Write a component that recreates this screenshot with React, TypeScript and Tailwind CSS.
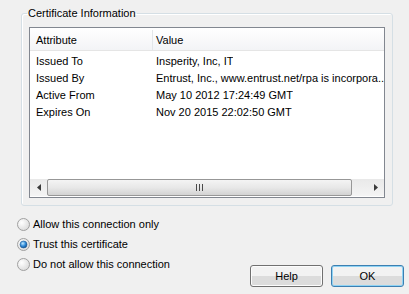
import React from "react";

const rows = [
  ["Issued To", "Insperity, Inc, IT"],
  ["Issued By", "Entrust, Inc., www.entrust.net/rpa is incorpora.."],
  ["Active From", "May 10 2012 17:24:49 GMT"],
  ["Expires On", "Nov 20 2015 22:02:50 GMT"],
];

const Radio = ({ checked, label }: { checked?: boolean; label: string }) => (
  <div className="flex h-[20px] items-center gap-[3px]">
    <svg width="13" height="13" viewBox="0 0 13 13">
      <defs>
        <radialGradient id="rf" cx="0.35" cy="0.35" r="0.8">
          <stop offset="0" stopColor="#ffffff" />
          <stop offset="1" stopColor="#d6d6d6" />
        </radialGradient>
        <radialGradient id="rd" cx="0.4" cy="0.35" r="0.7">
          <stop offset="0" stopColor="#bfe8ff" />
          <stop offset="0.55" stopColor="#2f8ad8" />
          <stop offset="1" stopColor="#0d4a8a" />
        </radialGradient>
      </defs>
      <circle cx="6.5" cy="6.5" r="6" fill="url(#rf)" stroke="#a0a0a0" />
      {checked && (
        <circle cx="6.5" cy="6.5" r="3.5" fill="url(#rd)" stroke="#1c5a96" strokeWidth="0.6" />
      )}
    </svg>
    <span>{label}</span>
  </div>
);

const Button = ({ label, primary }: { label: string; primary?: boolean }) => (
  <button
    className={`h-[22px] w-[73px] rounded-[3px] border bg-gradient-to-b from-[#f2f2f2] from-50% to-[#dcdcdc] to-50% ${
      primary
        ? "border-[#3c7fb1] shadow-[inset_0_0_0_1px_#8fd3f4]"
        : "border-[#707070] shadow-[inset_0_0_0_1px_#fcfcfc]"
    }`}
  >
    {label}
  </button>
);

export default function App() {
  return (
    <div className="h-[294px] w-[409px] overflow-hidden bg-[#f0f0f0] pt-[7px] font-['Liberation_Sans',Arial,sans-serif] text-[11px] leading-[13px] text-black">
      <fieldset className="m-0 ml-[21px] w-[368px] rounded-[3px] border border-[#d5dfe5] px-[7px] pb-[7px] pt-[7px] shadow-[inset_1px_1px_0_#ffffff]">
        <legend className="-ml-[2px] px-[1px] leading-[13px]">
          Certificate Information
        </legend>
        <div className="flex h-[171px] w-full flex-col border border-[#828790] bg-white">
          <div className="flex h-[23px] items-center border-b border-[#e5e5e5] bg-gradient-to-b from-white to-[#f3f4f6] pt-[2px]">
            <div className="w-[123px] border-r border-[#e3e6e9] pl-[6px] leading-[20px]">
              Attribute
            </div>
            <div className="pl-[3px]">Value</div>
          </div>
          <div className="flex-1 pt-[2px]">
            {rows.map(([a, v]) => (
              <div key={a} className="flex h-[17px] items-center">
                <div className="w-[123px] shrink-0 pl-[6px]">{a}</div>
                <div className="overflow-hidden whitespace-nowrap pl-[3px]">
                  {v}
                </div>
              </div>
            ))}
          </div>
          <div className="mb-[1px] flex h-[17px] bg-gradient-to-b from-[#e9e9e9] to-[#f4f4f4]">
            <div className="flex w-[17px] items-center justify-center">
              <svg width="4" height="7" viewBox="0 0 4 7">
                <path d="M4 0 L0 3.5 L4 7 Z" fill="#3a3a3a" />
              </svg>
            </div>
            <div className="flex w-[305px] items-center justify-center rounded-[2px] border border-[#979797] bg-gradient-to-b from-[#f4f4f4] via-[#e8e8e8] to-[#d3d3d3]">
              <svg width="7" height="7" viewBox="0 0 7 7">
                <path d="M0.5 0 V7 M3.5 0 V7 M6.5 0 V7" stroke="#4a4a4a" />
              </svg>
            </div>
            <div className="flex-1" />
            <div className="flex w-[17px] items-center justify-center">
              <svg width="4" height="7" viewBox="0 0 4 7">
                <path d="M0 0 L4 3.5 L0 7 Z" fill="#3a3a3a" />
              </svg>
            </div>
          </div>
        </div>
      </fieldset>
      <div className="mt-[8px] flex justify-between pl-[17px] pr-[5px]">
        <div className="flex flex-col">
          <Radio label="Allow this connection only" />
          <Radio checked label="Trust this certificate" />
          <Radio label="Do not allow this connection" />
        </div>
        <div className="mt-[51px] flex gap-[8px]">
          <Button label="Help" />
          <Button primary label="OK" />
        </div>
      </div>
    </div>
  );
}
